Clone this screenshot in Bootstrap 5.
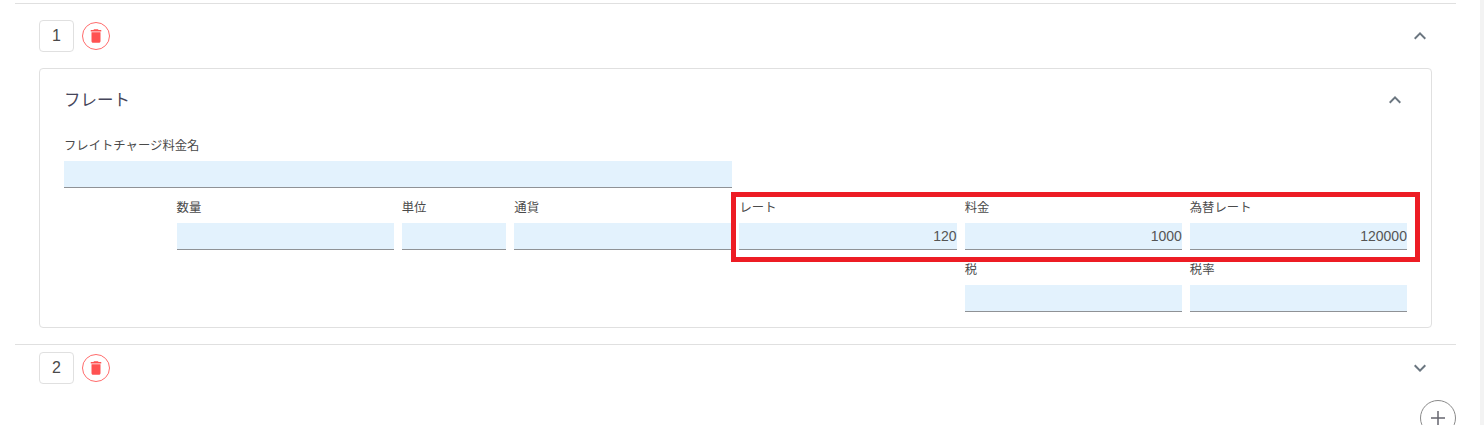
<!DOCTYPE html>
<html lang="ja">
<head>
    <meta charset="UTF-8">
    <meta name="viewport" content="width=device-width, initial-scale=1.0">
    <title>フレート</title>
    <link href="https://cdn.jsdelivr.net/npm/bootstrap@5.3.3/dist/css/bootstrap.min.css" rel="stylesheet">
    <style>
        html, body { height: 425px; overflow: hidden; }
        body { font-family: "Liberation Sans", "Noto Sans CJK JP", sans-serif; color: #4a4a4a; background: #fff; }
        .page-wrap { height: 425px; }
        .page-main { padding: 3px 24px 0 15px; }
        .scroll-strip { width: 4px; background: #f3f3f3; }
        .charge-item { border-top: 1px solid #e0e0e0; padding: 16px 24px 16px; }
        .charge-item.closed { padding-top: 7px; }
        .no-box { width: 35px; height: 32px; border: 1px solid #e0e0e0; border-radius: 4px; font-size: 16px; }
        .del-btn { width: 28px; height: 28px; margin-left: 8px; padding: 0; border: 1px solid #ff6b6b; border-radius: 50%; background: #fff; }
        .del-btn svg { width: 18px; height: 18px; fill: #ff5252; }
        .chev { width: 24px; height: 24px; fill: #6b7680; }
        .fare-card { border: 1px solid #e0e0e0; border-radius: 4px; margin-top: 16px; }
        .fare-head { padding: 19px 24px 26px; }
        .fare-title { font-size: 16.5px; line-height: 24px; color: #45455a; }
        .fare-body { padding: 0 24px 3px; }
        .fare-field { margin-bottom: 12px; }
        .fare-label { display: block; font-size: 12.35px; line-height: 16px; margin-bottom: 7px; color: #4a4a4a; }
        .fare-input.form-control { height: 27px; min-height: 0; padding: 0; font-size: 14px; line-height: 26px; color: #555; text-align: right; background: #e3f2fd; border: 0; border-bottom: 1px solid #8f9296; border-radius: 0; box-shadow: none; }
        .mark-box { position: absolute; left: 691px; top: 123px; width: 689px; height: 70px; border: 5px solid #ed1c24; pointer-events: none; }
        .add-btn { width: 36px; height: 36px; padding: 0; border: 1px solid #8a8a8a; border-radius: 50%; background: #fff; margin-right: -24px; flex-shrink: 0; }
        .add-btn svg { width: 24px; height: 24px; fill: #66666f; }
    </style>
</head>
<body>
    <div class="page-wrap d-flex">
        <main class="page-main flex-grow-1">
            <section class="charge-item">
                <div class="d-flex align-items-center">
                    <div class="no-box d-flex align-items-center justify-content-center">1</div>
                    <button class="del-btn d-flex align-items-center justify-content-center" type="button" aria-label="削除">
                        <svg viewBox="0 0 24 24"><path d="M6 19c0 1.1.9 2 2 2h8c1.1 0 2-.9 2-2V7H6v12zM19 4h-3.5l-1-1h-5l-1 1H5v2h14V4z"/></svg>
                    </button>
                    <svg class="chev ms-auto" viewBox="0 0 24 24"><path d="M12 8l-6 6 1.41 1.41L12 10.83l4.59 4.58L18 14z"/></svg>
                </div>
                <div class="card fare-card">
                    <div class="fare-head d-flex align-items-center justify-content-between">
                        <div class="fare-title">フレート</div>
                        <svg class="chev" viewBox="0 0 24 24"><path d="M12 8l-6 6 1.41 1.41L12 10.83l4.59 4.58L18 14z"/></svg>
                    </div>
                    <div class="fare-body">
                        <div class="row gx-2">
                            <div class="col-6 fare-field">
                                <label class="fare-label">フレイトチャージ料金名</label>
                                <input class="form-control fare-input" type="text">
                            </div>
                        </div>
                        <div class="row gx-2">
                            <div class="col-2 offset-1 fare-field">
                                <label class="fare-label">数量</label>
                                <input class="form-control fare-input" type="text">
                            </div>
                            <div class="col-1 fare-field">
                                <label class="fare-label">単位</label>
                                <input class="form-control fare-input" type="text">
                            </div>
                            <div class="col-2 fare-field">
                                <label class="fare-label">通貨</label>
                                <input class="form-control fare-input" type="text">
                            </div>
                            <div class="col-2 fare-field">
                                <label class="fare-label">レート</label>
                                <input class="form-control fare-input" type="text" value="120">
                            </div>
                            <div class="col-2 fare-field">
                                <label class="fare-label">料金</label>
                                <input class="form-control fare-input" type="text" value="1000">
                            </div>
                            <div class="col-2 fare-field">
                                <label class="fare-label">為替レート</label>
                                <input class="form-control fare-input" type="text" value="120000">
                            </div>
                        </div>
                        <div class="row gx-2">
                            <div class="col-2 offset-8 fare-field">
                                <label class="fare-label">税</label>
                                <input class="form-control fare-input" type="text">
                            </div>
                            <div class="col-2 fare-field">
                                <label class="fare-label">税率</label>
                                <input class="form-control fare-input" type="text">
                            </div>
                        </div>
                    </div>
                    <div class="mark-box"></div>
                </div>
            </section>
            <section class="charge-item closed">
                <div class="d-flex align-items-center">
                    <div class="no-box d-flex align-items-center justify-content-center">2</div>
                    <button class="del-btn d-flex align-items-center justify-content-center" type="button" aria-label="削除">
                        <svg viewBox="0 0 24 24"><path d="M6 19c0 1.1.9 2 2 2h8c1.1 0 2-.9 2-2V7H6v12zM19 4h-3.5l-1-1h-5l-1 1H5v2h14V4z"/></svg>
                    </button>
                    <svg class="chev ms-auto" viewBox="0 0 24 24"><path d="M16.59 8.59L12 13.17 7.41 8.59 6 10l6 6 6-6z"/></svg>
                </div>
                <div class="d-flex justify-content-end mt-3">
                    <button class="add-btn d-flex align-items-center justify-content-center" type="button" aria-label="追加">
                        <svg viewBox="0 0 24 24"><path d="M19 12.75h-6.25V19h-1.5v-6.25H5v-1.5h6.25V5h1.5v6.25H19z"/></svg>
                    </button>
                </div>
            </section>
        </main>
        <div class="scroll-strip"></div>
    </div>
    <script src="https://cdn.jsdelivr.net/npm/bootstrap@5.3.3/dist/js/bootstrap.bundle.min.js"></script>
</body>
</html>
